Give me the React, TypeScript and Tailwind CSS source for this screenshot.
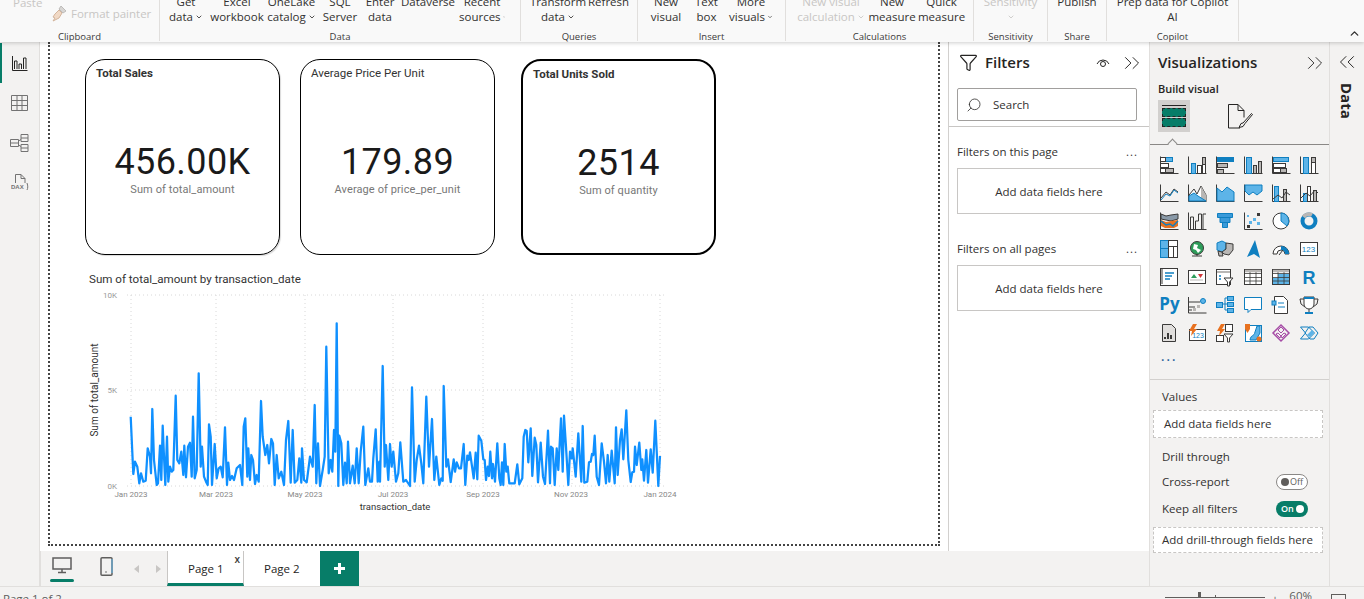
import { ChevronDown, ChevronUp, ChevronsLeft, ChevronsRight, Funnel, Search } from 'lucide-react';
import type { ReactNode } from 'react';

const DARK = '#3b3a39';
const BLUE = '#5db4e8';
const DEEP = '#0f7fc0';
const GREY = '#b9b7b5';
const ORANGE = '#e8711f';

// traced from the chart, in 3x pixels
const LINE_LEFT = [
  [152, 440], [160, 612], [165, 575], [172, 590], [178, 640], [183, 610], [190, 635], [197, 632], [203, 535], [210, 560], [213, 610], [217, 417], [222, 570], [230, 645], [234, 640], [240, 527], [244, 630], [248, 467], [252, 560], [256, 645], [261, 500], [265, 635], [270, 590], [275, 605], [280, 600], [287, 377], [292, 570], [298, 580], [304, 545], [310, 615], [313, 527], [318, 622], [324, 530], [330, 518], [335, 620], [339, 440], [344, 625], [350, 600], [356, 310], [362, 590], [366, 530], [372, 620], [378, 635], [383, 645], [387, 463], [392, 500], [396, 645], [404, 522], [410, 625], [416, 595], [422, 590], [428, 622], [435, 472], [441, 645], [445, 578], [450, 630], [456, 618], [462, 630], [470, 595], [480, 585], [487, 645], [491, 470], [496, 445], [502, 620], [505, 535], [510, 630], [514, 555], [519, 570], [525, 642], [530, 615], [536, 635], [543, 393], [548, 500], [556, 555], [562, 525], [567, 580], [574, 507], [579, 520], [584, 645], [590, 555], [596, 625], [604, 605], [612, 645], [618, 510], [625, 453], [632, 638], [638, 480], [644, 638], [652, 630], [658, 565], [664, 638], [666, 535], [672, 630], [680, 637], [690, 560], [698, 590], [704, 405], [709, 640], [714, 520], [720, 648], [728, 600], [734, 560], [739, 230], [746, 610], [752, 570], [757, 605], [762, 480], [766, 545], [770, 160], [775, 648], [778, 497], [784, 520], [790, 645], [795, 578], [800, 640], [804, 515], [810, 640], [818, 587], [824, 640], [830, 535], [836, 640], [842, 545], [850, 470], [856, 645], [865, 595], [870, 635], [876, 635], [880, 565], [887, 478], [893, 635], [898, 575],
];
const LINE_RIGHT = [
  [0, 635], [8, 288], [14, 590], [18, 525], [25, 630], [30, 522], [35, 590], [40, 545], [48, 635], [55, 610], [61, 517], [70, 635], [78, 630], [90, 648], [96, 352], [104, 635], [110, 570], [117, 527], [124, 580], [130, 640], [139, 380], [147, 590], [156, 447], [163, 630], [169, 560], [178, 645], [184, 625], [188, 632], [191, 348], [199, 590], [204, 568], [212, 636], [221, 568], [225, 605], [230, 577], [237, 595], [243, 595], [251, 522], [256, 645], [262, 557], [266, 570], [270, 547], [277, 595], [281, 625], [287, 548], [292, 628], [296, 497], [304, 512], [310, 568], [314, 570], [318, 630], [323, 590], [327, 618], [331, 545], [336, 625], [339, 582], [345, 635], [352, 520], [358, 625], [362, 645], [366, 577], [370, 645], [374, 522], [379, 605], [383, 590], [388, 640], [404, 640], [412, 583], [418, 643], [427, 625], [431, 500], [436, 480], [440, 483], [445, 577], [452, 475], [457, 618], [464, 503], [469, 525], [474, 637], [482, 518], [489, 620], [495, 642], [504, 482], [510, 640], [513, 530], [518, 535], [524, 645], [530, 535], [535, 600], [543, 445], [548, 605], [552, 437], [558, 530], [565, 645], [570, 545], [575, 565], [578, 535], [587, 620], [595, 490], [604, 635], [608, 468], [613, 638], [622, 635], [627, 577], [632, 575], [636, 552], [640, 555], [644, 497], [650, 620], [657, 645], [665, 520], [672, 575], [678, 640], [683, 555], [688, 635], [695, 542], [704, 640], [708, 472], [713, 615], [720, 510], [725, 478], [730, 568], [739, 421], [745, 570], [752, 636], [757, 607], [762, 605], [765, 530], [770, 585], [778, 518], [784, 600], [787, 568], [792, 632], [799, 540], [804, 638], [812, 538], [818, 608], [826, 452], [835, 648], [840, 558],
];

const linePoints = [...LINE_LEFT, ...LINE_RIGHT.map(([x, y]) => [x + 900, y])]
  .map(([x, y]) => `${(x / 3).toFixed(1)},${(y / 3).toFixed(1)}`)
  .join(' ');

const Axis = () => <path d="M.5 .5v17h18" fill="none" stroke={DARK} />;

function Box(props: { x: number; y: number; w: number; h: number; fill?: string; stroke?: string }) {
  return (
    <rect
      x={props.x + 0.5}
      y={props.y + 0.5}
      width={props.w}
      height={props.h}
      fill={props.fill ?? '#fff'}
      stroke={props.stroke ?? DARK}
    />
  );
}

// the visual picker, row by row
const VISUAL_ICONS: ReactNode[] = [
  <><Axis /><Box x={5} y={1} w={7} h={4} fill={BLUE} stroke={DEEP} /><Box x={0} y={1} w={5} h={4} /><Box x={0} y={7} w={8} h={4} /><Box x={0} y={12} w={5} h={4} /><Box x={5} y={12} w={8} h={4} fill={GREY} /></>,
  <><Axis /><Box x={3} y={7} w={4} h={10} fill={BLUE} stroke={DEEP} /><Box x={9} y={9} w={4} h={8} /><Box x={14} y={1} w={3} h={7} fill={GREY} /><Box x={14} y={8} w={3} h={9} /></>,
  <><Axis /><Box x={1} y={1} w={16} h={4} fill={DEEP} stroke={DEEP} /><Box x={1} y={7} w={10} h={4} fill={GREY} /><Box x={1} y={13} w={6} h={4} fill={GREY} /></>,
  <><Axis /><Box x={2} y={1} w={5} h={16} fill={BLUE} stroke={DEEP} /><Box x={9} y={9} w={3} h={8} fill={GREY} /><Box x={14} y={5} w={3} h={12} fill={GREY} /></>,
  <><Axis /><Box x={1} y={1} w={15} h={4} fill={BLUE} stroke={DEEP} /><Box x={1} y={7} w={12} h={4} /><Box x={1} y={12} w={7} h={4} /><Box x={8} y={12} w={6} h={4} fill={GREY} /></>,
  <><Axis /><Box x={3} y={1} w={5} h={16} fill={BLUE} stroke={DEEP} /><Box x={11} y={1} w={4} h={5} fill={GREY} /><Box x={11} y={6} w={4} h={11} /></>,

  <><Axis /><path d="M1 14l5-6 4 3 4-6 4 3" fill="none" stroke={DARK} /><path d="M1 16l5-6 4 2 4-6 4 3" fill="none" stroke={DEEP} /></>,
  <><Axis /><path d="M1 17V11l5-6 3 5 4-8 5 9v6z" fill="#fff" stroke={DARK} /><path d="M13 2l5 9v6h-5z" fill={GREY} /><path d="M1 17v-5l5-3 4 3 8 5z" fill={BLUE} stroke={DEEP} /></>,
  <><Axis /><path d="M1 4l5 4 5-5 7 5v9H1z" fill={BLUE} stroke={DEEP} /></>,
  <><Axis /><path d="M1 1h17v6l-5 4-4-3-4 3-4-4z" fill={BLUE} stroke={DEEP} /></>,
  <><Axis /><Box x={2} y={2} w={4} h={15} fill={BLUE} stroke={DEEP} /><Box x={11} y={5} w={3} h={12} fill={GREY} /><path d="M1 15l5-4 4 3 4-6 4 3" fill="none" stroke={DARK} /></>,
  <><Axis /><Box x={3} y={9} w={4} h={8} fill={BLUE} stroke={DEEP} /><Box x={7} y={2} w={3} h={15} /><Box x={13} y={6} w={3} h={11} fill={GREY} /><path d="M1 14l5-5 4 3 5-6 3 3" fill="none" stroke={DARK} /></>,

  <><Axis /><path d="M1 2l5 2 5-1 7-1v5l-7 2-5-1-5-1z" fill="#8a9aa8" stroke={DARK} /><path d="M1 8l5 2 5-1 7-1v6l-4 2H5l-4-2z" fill={ORANGE} /><path d="M1 9l5 4 4-1 3 2 5-5" fill="none" stroke={DEEP} strokeWidth="1.500" /></>,
  <><Axis /><path d="M2.500 17V5h3v12M7.500 17V9h3V2h3v15M15 17V2h3" fill="none" stroke={DARK} /></>,
  <path d="M1.500 1.500h15v4h-15zM4 5.500h10v5H4zM6.500 10.500h5v5h-5z" fill="#3a9ad9" stroke={DEEP} />,
  <><Axis /><rect x="13" y="1" width="3" height="3" fill={DARK} /><rect x="9" y="6" width="3" height="3" fill={BLUE} /><rect x="5" y="9" width="3" height="3" fill={BLUE} /><rect x="13" y="10" width="3" height="3" fill={BLUE} /><rect x="3" y="13" width="3" height="3" fill={DARK} /><rect x="3" y="3" width="2" height="2" fill={BLUE} /></>,
  <><circle cx="9" cy="9" r="8" fill="#fff" stroke={DARK} /><path d="M9 9V1a8 8 0 0 1 6 13z" fill={BLUE} stroke={DEEP} /></>,
  <><circle cx="9" cy="9" r="6.500" fill="none" stroke={DEEP} strokeWidth="4" /><path d="M3.500 5A6.500 6.500 0 0 1 12 3" fill="none" stroke={GREY} strokeWidth="4" /></>,

  <><Box x={0} y={0} w={8} h={8} fill={BLUE} stroke={DEEP} /><Box x={0} y={8} w={8} h={9} fill={BLUE} stroke={DEEP} /><Box x={8} y={0} w={9} h={6} /><Box x={8} y={6} w={5} h={11} /><Box x={13} y={6} w={4} h={11} /></>,
  <><circle cx="9" cy="8" r="6.500" fill="#2d9d5a" stroke={DARK} /><path d="M6 4l4 1-1 3 4 2-3 3-2-3-3-1z" fill="#fff" /><path d="M4 16h10M9 14v2" stroke={DARK} fill="none" /></>,
  <><path d="M1 3l5-2 4 2v6l-4 3-5-2z" fill={BLUE} stroke={DEEP} /><path d="M10 3l7 1v6l-4 5-5-1-2-2 4-3z" fill={GREY} stroke={DARK} /><path d="M2 11l4 1 1 4H3z" fill={GREY} stroke={DARK} /></>,
  <path d="M11 0l5 18-6-4-7 3z" fill={DEEP} />,
  <><path d="M1 14a8 8 0 0 1 16 0h-4a4 4 0 0 0-8 0z" fill="#fff" stroke={DARK} /><path d="M9 6a8 8 0 0 1 8 8h-4a4 4 0 0 0-4-4z" fill={DEEP} /><path d="M7 15l4-5" stroke={DARK} /></>,
  <><Box x={0} y={2} w={17} h={13} fill="#fff" /><text x="8.500" y="12" textAnchor="middle" fontSize="8" fill={DEEP} fontFamily="'Liberation Sans', sans-serif">123</text></>,

  <><Box x={0} y={0} w={17} h={17} /><path d="M2 1v15" stroke={DARK} /><path d="M5 5h9M5 8h7M5 11h5" stroke={DEEP} strokeWidth="1.500" /></>,
  <><Box x={0} y={2} w={17} h={13} /><path d="M3 10l3-4 3 4z" fill="#2d9d5a" /><path d="M10 6h5l-2.500 4z" fill="#d13438" /><path d="M2 12h13" stroke={GREY} /></>,
  <><Box x={0} y={1} w={14} h={15} /><path d="M1 4h13" stroke={GREY} strokeWidth="2" /><path d="M8 10h9l-3.500 4v4h-2v-4z" fill="#fff" stroke={DARK} /><path d="M3 8h2M3 11h2" stroke={DEEP} strokeWidth="1.500" /></>,
  <><Box x={0} y={1} w={17} h={15} /><path d="M.5 5.500h17M.5 9.500h17M.5 13h17M6 1v15M12 1v15" stroke={DARK} fill="none" strokeWidth=".8" /><path d="M1 3h16" stroke={GREY} strokeWidth="2.500" /></>,
  <><Box x={0} y={1} w={17} h={15} /><rect x="6" y="6" width="11" height="10" fill={BLUE} /><rect x="1" y="10" width="5" height="6" fill={BLUE} /><path d="M.5 5.500h17M.5 9.500h17M.5 13h17M6 1v15M12 1v15" stroke={DARK} fill="none" strokeWidth=".8" /><path d="M1 3h16" stroke={GREY} strokeWidth="2.500" /></>,
  <text x="9" y="16" textAnchor="middle" fontSize="18" fontWeight="700" fill={DEEP} fontFamily="'Liberation Sans', sans-serif">R</text>,

  <text x="9.500" y="14" textAnchor="middle" fontSize="17" fontWeight="700" fill={DEEP} fontFamily="'Open Sans', sans-serif">Py</text>,
  <><path d="M.5 1v16h18M1 6h11M1 11h6M1 14h3" fill="none" stroke={DARK} /><circle cx="15" cy="5" r="2.500" fill={BLUE} stroke={DEEP} /><rect x="9" y="9" width="3" height="3" fill={GREY} /><rect x="5" y="12" width="3" height="3" fill={GREY} /></>,
  <><Box x={0} y={6} w={6} h={5} fill={BLUE} stroke={DEEP} /><Box x={11} y={0} w={6} h={4} fill={BLUE} stroke={DEEP} /><Box x={11} y={6} w={6} h={4} fill={BLUE} stroke={DEEP} /><Box x={11} y={12} w={6} h={4} fill={BLUE} stroke={DEEP} /><path d="M6 8h3M9 2v12M9 2h2M9 8h2M9 14h2" fill="none" stroke={DEEP} /></>,
  <path d="M.5 1.500h17v12H7l-3 3v-3H.500z" fill="#fff" stroke={DEEP} />,
  <><path d="M2.500 .5h9l4 4v13h-13z" fill="#fff" stroke={DARK} /><rect x="0" y="5" width="4" height="4" fill={BLUE} stroke={DEEP} /><path d="M6 7h6M6 11h7" stroke={DEEP} /></>,
  <><path d="M4 1h10v7a5 5 0 0 1-10 0z" fill="#fff" stroke={DARK} /><path d="M4 3H0l1 5 4 3M14 3h4l-1 5-4 3M9 13v3M5 17h8" fill="none" stroke={DARK} /><path d="M4 1h10v2H4zM5 16h8v2H5z" fill={DEEP} /></>,

  <><path d="M2.500 .5h9l4 4v13h-13z" fill="#e1dfdd" stroke={DARK} /><path d="M5 15v-2M8 15V9M11 15v-4" stroke={DARK} strokeWidth="2" /></>,
  <><Box x={1} y={5} w={16} h={11} /><text x="10" y="14" textAnchor="middle" fontSize="7" fill={DEEP} fontFamily="'Liberation Sans', sans-serif">123</text><path d="M5 0h4L6 5h3l-6 7 1-5H1z" fill={ORANGE} /></>,
  <><Box x={9} y={0} w={7} h={7} /><Box x={0} y={11} w={7} h={6} /><path d="M8 10h9l-3.500 4v4h-2v-4z" fill="#fff" stroke={DARK} /><path d="M5 0h4L6 5h3l-6 7 1-5H1z" fill={ORANGE} /></>,
  <><Box x={1} y={1} w={16} h={16} stroke={DEEP} /><path d="M6 16c1-6 4-3 5-8l2-6h3v7l-4 7z" fill={BLUE} stroke={DEEP} /><path d="M1 0h5v5L3.500 9 1 5z" fill={ORANGE} /><circle cx="15" cy="15" r="2.500" fill={ORANGE} /></>,
  <><path d="M9 1l8 8-8 8-8-8z" fill="none" stroke="#a64ca6" strokeWidth="1.500" /><path d="M9 3l3 3-3 3-3-3zM6 9l3 3-1 2-4-4zM12 9l2 1-4 4-1-2z" fill="none" stroke="#a64ca6" /></>,
  <><path d="M.5 3h8l6 6-6 6h-8l5-6z" fill="none" stroke={DEEP} /><path d="M5 9l4-6h4l5 6-4 6h-4z" fill="none" stroke={DEEP} /><path d="M7 11l5-5 2 3-4 4z" fill={BLUE} /></>,
];

function RibbonItem(props: { width: string; top?: string; bottom: string; menu?: boolean; muted?: boolean }) {
  return (
    <div className={`${props.width} shrink-0 text-center text-[11.5px] leading-[15px] whitespace-nowrap ${props.muted ? 'text-[#c8c6c4]' : 'text-[#323130]'}`}>
      <div className="h-[15px]">{props.top}</div>
      <div className="flex h-[15px] items-center justify-center gap-[2px]">
        {props.bottom}
        {props.menu && <ChevronDown size={8} strokeWidth={2.5} />}
      </div>
    </div>
  );
}

function RibbonGroup(props: { width: string; label: string; className?: string; children: ReactNode }) {
  return (
    <div className={`${props.width} shrink-0 h-[41px] flex flex-col border-r border-[#e1dfdd]`}>
      <div className={`h-[24px] shrink-0 overflow-hidden flex items-end ${props.className ?? ''}`}>{props.children}</div>
      <div className="mt-[6px] shrink-0 text-center text-[9.5px] leading-[14px] text-[#3b3a39]">{props.label}</div>
    </div>
  );
}

function Ribbon() {
  return (
    <header className="relative z-10 h-[42px] shrink-0 flex bg-[#f9f9f9] shadow-[0_1px_4px_rgba(0,0,0,0.2)] overflow-hidden">
      <div className="w-[160px] shrink-0 h-[41px] flex flex-col border-r border-[#e1dfdd]">
        <div className="h-[24px] shrink-0 relative overflow-hidden">
          <div className="absolute left-[13px] top-[-6px] text-[11.5px] text-[#c8c6c4]">Paste</div>
          <div className="absolute left-[51px] top-[5px] flex items-center gap-[3px] text-[11.5px] leading-[17px] text-[#c8c6c4] whitespace-nowrap">
            <svg width="17" height="17" viewBox="0 0 17 17">
              <path d="M10 1l5 5-3 2-4-4z" fill="#d8d6d4" stroke="#bdbbb9" />
              <path d="M8 5l3 3-3 5-6 3 2-3-2-1 2-3z" fill="#f1d9c5" stroke="#d3b49c" />
            </svg>
            Format painter
          </div>
        </div>
        <div className="mt-[6px] shrink-0 text-center text-[9.5px] leading-[14px] text-[#3b3a39]">Clipboard</div>
      </div>
      <RibbonGroup width="w-[361px]" label="Data" className="pl-[4px]">
        <RibbonItem width="w-[44px]" top="Get" bottom="data" menu />
        <RibbonItem width="w-[58px]" top="Excel" bottom="workbook" />
        <RibbonItem width="w-[51px]" top="OneLake" bottom="catalog" menu />
        <RibbonItem width="w-[46px]" top="SQL" bottom="Server" />
        <RibbonItem width="w-[34px]" top="Enter" bottom="data" />
        <RibbonItem width="w-[62px]" top="Dataverse" bottom="" />
        <RibbonItem width="w-[46px]" top="Recent" bottom="sources" menu />
      </RibbonGroup>
      <RibbonGroup width="w-[117px]" label="Queries" className="pl-[7px]">
        <RibbonItem width="w-[60px]" top="Transform" bottom="data" menu />
        <RibbonItem width="w-[41px]" top="Refresh" bottom="" />
      </RibbonGroup>
      <RibbonGroup width="w-[148px]" label="Insert" className="pl-[10px]">
        <RibbonItem width="w-[36px]" top="New" bottom="visual" />
        <RibbonItem width="w-[45px]" top="Text" bottom="box" />
        <RibbonItem width="w-[44px]" top="More" bottom="visuals" menu />
      </RibbonGroup>
      <RibbonGroup width="w-[188px]" label="Calculations" className="pl-[10px]">
        <RibbonItem width="w-[70px]" top="New visual" bottom="calculation" menu muted />
        <RibbonItem width="w-[52px]" top="New" bottom="measure" />
        <RibbonItem width="w-[47px]" top="Quick" bottom="measure" />
      </RibbonGroup>
      <RibbonGroup width="w-[74px]" label="Sensitivity">
        <div className="w-full text-center text-[11.5px] leading-[15px] text-[#c8c6c4]">
          <div>Sensitivity</div>
          <div className="flex h-[15px] items-center justify-center"><ChevronDown size={8} strokeWidth={2.5} /></div>
        </div>
      </RibbonGroup>
      <RibbonGroup width="w-[59px]" label="Share">
        <RibbonItem width="w-full" top="Publish" bottom="" />
      </RibbonGroup>
      <RibbonGroup width="w-[132px]" label="Copilot">
        <RibbonItem width="w-full" top="Prep data for Copilot" bottom="AI" />
      </RibbonGroup>
      <ChevronUp size={13} strokeWidth={2.5} className="absolute right-[3px] top-[27px] text-[#323130]" />
    </header>
  );
}

function LeftRail() {
  return (
    <nav className="w-[40px] shrink-0 flex flex-col pt-px bg-[#f3f2f1] border-r border-[#e1dfdd]">
      <div className="h-[40px] flex items-center justify-center border-l-[2px] border-[#077d68] pr-[2px]">
        <svg width="16" height="16" viewBox="0 0 16 16" fill="none" stroke="#252423">
          <path d="M.5 1v14.500h15M2.500 14V6h2.500v8M7 14V9h2.500v5M11.500 14V3H14v11" />
        </svg>
      </div>
      <div className="h-[40px] flex items-center justify-center">
        <svg width="17" height="16" viewBox="0 0 17 16" fill="none" stroke="#737373">
          <path d="M.5 .5h16v15H.500zM.5 5.500h16M.5 10.500h16M6 .5v15M11 .5v15" />
        </svg>
      </div>
      <div className="h-[40px] flex items-center justify-center">
        <svg width="19" height="18" viewBox="0 0 19 18" fill="none" stroke="#737373">
          <path d="M.5 5.500h8v7h-8zM.5 9h8M11 .5h7v7h-7zM11 4h7M11 10.500h7v7h-7zM11 14h7M8.500 7L11 5.500M8.500 11l2.500 1.500" />
        </svg>
      </div>
      <div className="h-[40px] flex items-center justify-center">
        <svg width="18" height="18" viewBox="0 0 18 18" fill="none" stroke="#737373">
          <path d="M4.500 9V.5H10l4 4V9M10 .5v4h4M16 9c1 3 1 5 0 7" />
          <text x="0" y="15" fontSize="6" fontWeight="700" fill="#737373" stroke="none" fontFamily="'Liberation Sans', sans-serif">DAX</text>
        </svg>
      </div>
    </nav>
  );
}

function MetricCard(props: { title: string; value: string; caption: string; className: string; bold?: boolean }) {
  return (
    <div className={`w-[195px] h-[196px] shrink-0 flex flex-col items-stretch rounded-[20px] border-black ${props.className} font-['Roboto',sans-serif]`}>
      <div className={`pl-[10px] pt-[6px] text-[11.5px] leading-[14px] text-[#333] ${props.bold ? 'font-bold' : ''}`}>{props.title}</div>
      <div className="mt-[62px] text-center text-[36px] leading-[40px] tracking-[0.4px] text-[#1a1a1a]">{props.value}</div>
      <div className="text-center text-[11px] leading-[16px] tracking-[0.1px] text-[#777]">{props.caption}</div>
    </div>
  );
}

function SalesChart() {
  const gridX = [51, 136, 225, 313, 403, 492, 580];
  const gridY = [25, 120, 216];
  const labels = [
    { x: 51, text: 'Jan 2023' },
    { x: 136, text: 'Mar 2023' },
    { x: 225, text: 'May 2023' },
    { x: 313, text: 'Jul 2023' },
    { x: 403, text: 'Sep 2023' },
    { x: 491, text: 'Nov 2023' },
    { x: 580, text: 'Jan 2024' },
  ];
  return (
    <svg width="600" height="250" viewBox="0 0 600 250" className="block font-['Roboto',sans-serif]">
      <text x="9" y="13" fontSize="11.600" fill="#333">Sum of total_amount by transaction_date</text>
      {gridY.map((y) => (
        <line key={y} x1="47" x2="586" y1={y} y2={y} stroke="#d8d8d8" strokeDasharray="1 3" />
      ))}
      {gridX.map((x) => (
        <line key={x} x1={x} x2={x} y1="25" y2="216" stroke="#d8d8d8" strokeDasharray="1 3" />
      ))}
      <text x="37" y="28" fontSize="8" fill="#999" textAnchor="end">10K</text>
      <text x="37" y="123" fontSize="8" fill="#999" textAnchor="end">5K</text>
      <text x="37" y="219" fontSize="8" fill="#999" textAnchor="end">0K</text>
      {labels.map((label) => (
        <text key={label.text} x={label.x} y="227" fontSize="8" fill="#888" textAnchor="middle">{label.text}</text>
      ))}
      <text transform="translate(18 120) rotate(-90)" fontSize="10" fill="#333" textAnchor="middle">Sum of total_amount</text>
      <text x="315" y="240" fontSize="9.500" fill="#333" textAnchor="middle">transaction_date</text>
      <polyline points={linePoints} fill="none" stroke="#0f90ff" strokeWidth="2.250" strokeLinejoin="round" />
    </svg>
  );
}

function Canvas() {
  return (
    <main className="w-[908px] shrink-0 bg-white px-[8px] pb-[5px] flex flex-col">
      <div className="flex-1 border-x-2 border-b-2 border-dotted border-[#444] pt-[17px]">
        <div className="flex pl-[35px]">
          <MetricCard title="Total Sales" value="456.00K" caption="Sum of total_amount" className="border shadow-[1px_1px_1px_rgba(0,0,0,0.15)]" bold />
          <div className="w-[20px] shrink-0" />
          <MetricCard title="Average Price Per Unit" value="179.89" caption="Average of price_per_unit" className="border-[1.5px]" />
          <div className="w-[26px] shrink-0" />
          <MetricCard title="Total Units Sold" value="2514" caption="Sum of quantity" className="border-2" bold />
        </div>
        <div className="pl-[30px] mt-[15px]">
          <SalesChart />
        </div>
      </div>
    </main>
  );
}

function FilterDrop(props: { title: string }) {
  return (
    <div>
      <div className="flex h-[20px] items-center justify-between pl-[8px] pr-[11px] pb-px text-[11.5px] text-[#323130]">
        <span>{props.title}</span>
        <span className="tracking-[1px] text-[#3b3a39]">...</span>
      </div>
      <div className="mx-[8px] mt-[6px] flex h-[46px] w-[184px] items-center justify-center border border-[#c8c6c4] bg-white pt-px text-[11.5px] text-[#323130]">
        Add data fields here
      </div>
    </div>
  );
}

function FiltersPane() {
  return (
    <aside className="w-[201px] shrink-0 bg-white border-l border-[#d2d0ce] flex flex-col">
      <div className="flex h-[40px] items-center pl-[10px] pr-[4px] pt-px text-[#252423]">
        <Funnel size={19} strokeWidth={1.5} />
        <span className="ml-[7px] text-[15px] font-semibold">Filters</span>
        <svg width="14" height="12" viewBox="0 0 14 12" fill="none" stroke="#252423" className="ml-auto mr-[9px]">
          <path d="M1 7a6.500 6.500 0 0 1 12 0" />
          <circle cx="7" cy="7" r="2.500" />
        </svg>
        <ChevronsRight size={26} strokeWidth={0.9} />
      </div>
      <div className="mx-[8px] mt-[6px] flex h-[33px] w-[180px] items-center gap-[11px] border border-[#a19f9d] rounded-[2px] pl-[8px] pt-px text-[11.5px] text-[#323130]">
        <Search size={16} strokeWidth={1.25} className="-scale-x-100" />
        Search
      </div>
      <div className="mt-[5px] border-b border-[#c8c6c4]" />
      <div className="mt-[15px]">
        <FilterDrop title="Filters on this page" />
      </div>
      <div className="mt-[25px]">
        <FilterDrop title="Filters on all pages" />
      </div>
    </aside>
  );
}

function PageTabs() {
  return (
    <div className="h-[35px] shrink-0 flex bg-[#f3f2f1] border-l border-[#e1dfdd]">
      <div className="w-[126px] shrink-0 flex items-start">
        <div className="ml-[9px] w-[24px] flex flex-col items-center pt-[6px]">
          <svg width="20" height="17" viewBox="0 0 20 17" fill="none" stroke="#5f5e5d" strokeWidth="1.500">
            <path d="M1 1h18v11H1zM10 12v3M6 15.500h8" />
          </svg>
          <div className="mt-[5px] h-[3px] w-[24px] rounded-full bg-[#077d68]" />
        </div>
        <svg width="13" height="19" viewBox="0 0 13 19" fill="none" className="ml-[26px] mt-[6px]">
          <rect x="1" y=".75" width="11" height="17.500" rx="1" stroke="#5f5e5d" strokeWidth="1.500" />
          <path d="M12 2v14" stroke="#5db4e8" />
          <circle cx="6" cy="15" r=".8" fill="#5f5e5d" />
        </svg>
        <div className="ml-[21px] mt-[14px] h-0 w-0 border-y-[4px] border-r-[5px] border-y-transparent border-r-[#c8c6c4]" />
        <div className="ml-[17px] mt-[14px] h-0 w-0 border-y-[4px] border-l-[5px] border-y-transparent border-l-[#c8c6c4]" />
      </div>
      <div className="relative w-[77px] shrink-0 flex items-center bg-white border-x border-[#c8c6c4] border-b-[3px] border-b-[#077d68] pl-[20px] pt-[3px] text-[11.5px] text-[#252423]">
        Page 1
        <span className="absolute right-[3px] top-[2px] text-[10px] leading-[12px] font-semibold text-[#3b3a39]">x</span>
      </div>
      <div className="w-[76px] shrink-0 flex items-center bg-white pl-[20px] text-[11.5px] text-[#252423]">Page 2</div>
      <div className="w-[39px] shrink-0 flex items-center justify-center bg-[#077d68]">
        <svg width="11" height="11" viewBox="0 0 11 11" fill="#fff">
          <path d="M4 0h3v4h4v3H7v4H4V7H0V4h4z" />
        </svg>
      </div>
    </div>
  );
}

function Toggle(props: { on?: boolean }) {
  if (props.on) {
    return (
      <div className="flex h-[16px] w-[32px] items-center justify-between rounded-full bg-[#077d68] pl-[5px] pr-[4px] text-[9px] font-semibold text-white">
        On
        <span className="h-[8px] w-[8px] rounded-full bg-white" />
      </div>
    );
  }
  return (
    <div className="flex h-[16px] w-[32px] items-center gap-[1px] rounded-full border border-[#8a8886] bg-white pl-[4px] text-[9px] text-[#605e5c]">
      <span className="h-[8px] w-[8px] rounded-full bg-[#605e5c]" />
      Off
    </div>
  );
}

function VisualizationsPane() {
  return (
    <aside className="w-[181px] shrink-0 bg-[#f3f2f1] border-l border-r border-[#e1dfdd] flex flex-col text-[#323130]">
      <div className="flex h-[39px] items-center justify-between pl-[8px] pr-px pt-[2px]">
        <span className="text-[15px] font-semibold text-[#252423]">Visualizations</span>
        <ChevronsRight size={26} strokeWidth={0.9} />
      </div>
      <div className="pl-[8px] text-[11px] leading-[16px] font-semibold text-[#252423]">Build visual</div>
      <div className="mt-[3px] flex items-center pl-[8px]">
        <div className="flex h-[32px] w-[32px] flex-col justify-center gap-[1px] bg-[#d2d0ce] px-[4px]">
          <div className="h-px bg-[#252423] mb-[1px]" />
          <div className="h-[9px] border border-dashed border-[#252423] bg-[#077d68]" />
          <div className="h-[9px] border border-dashed border-[#252423] bg-[#077d68]" />
        </div>
        <svg width="26" height="27" viewBox="0 0 26 27" fill="none" stroke="#252423" className="ml-[37px]">
          <path d="M13 25H1.500V1.500H11l6 6v7M11 1.500v6h6" />
          <path d="M24.500 10.500L16 20l-2 .5-2 4 4-1 2-3 7.500-9z" />
        </svg>
      </div>
      <div className="relative mt-[12px] border-b border-[#8a8886]">
        <div className="absolute left-[19px] top-[-4px] h-[7px] w-[7px] rotate-45 border-l border-t border-[#8a8886] bg-[#f3f2f1]" />
      </div>
      <div className="mt-[6px] grid grid-cols-[repeat(6,28px)] auto-rows-[28px] pl-[5px]">
        {VISUAL_ICONS.map((icon, i) => (
          <div key={i} className="flex items-center justify-center">
            <svg width="19" height="18" viewBox="0 0 19 18" className="overflow-visible">{icon}</svg>
          </div>
        ))}
        <div className="flex items-center justify-center pb-[12px] text-[15px] leading-[10px] tracking-[1.5px] text-[#1f5c99]">...</div>
      </div>
      <div className="mt-[4px] border-b border-[#d2d0ce]" />
      <div className="mt-[9px] pl-[12px] text-[11.5px] leading-[16px]">Values</div>
      <div className="mx-[3px] mt-[5px] flex h-[28px] w-[170px] items-center border border-dashed border-[#c8c6c4] bg-white pl-[10px] text-[11.5px]">
        Add data fields here
      </div>
      <div className="mt-[11px] pl-[12px] text-[11.5px] leading-[16px] font-medium">Drill through</div>
      <div className="mt-[9px] flex h-[16px] items-center justify-between pl-[12px] pr-[21px] text-[11.5px]">
        Cross-report
        <Toggle />
      </div>
      <div className="mt-[11px] flex h-[16px] items-center justify-between pl-[12px] pr-[21px] text-[11.5px]">
        Keep all filters
        <Toggle on />
      </div>
      <div className="mx-[3px] mt-[10px] flex h-[26px] w-[170px] items-center border border-dashed border-[#c8c6c4] bg-white pl-[8px] text-[11.5px] whitespace-nowrap">
        Add drill-through fields here
      </div>
    </aside>
  );
}

function DataRail() {
  return (
    <aside className="flex-1 bg-[#f3f2f1] flex flex-col items-center pt-[7px] text-[#252423]">
      <ChevronsLeft size={26} strokeWidth={0.9} />
      <div className="mt-[8px] text-[15px] leading-[16px] font-bold [writing-mode:vertical-rl]">Data</div>
    </aside>
  );
}

function StatusBar() {
  return (
    <footer className="h-[13px] shrink-0 flex items-start overflow-hidden bg-[#f3f2f1] border-t border-[#e1dfdd] pl-[3px] pt-[4px] text-[11.5px] leading-[16px] text-[#605e5c]">
      <span>Page 1 of 2</span>
      <div className="ml-auto flex items-start">
        <span className="text-[#605e5c]">-</span>
        <div className="relative ml-[3px] mt-[6px] h-px w-[100px] bg-[#605e5c]">
          <div className="absolute left-[33px] top-[-5px] h-[6px] w-[3px] bg-[#605e5c]" />
          <div className="absolute left-[50px] top-[-2px] h-[3px] w-px bg-[#605e5c]" />
        </div>
        <span className="ml-[7px]">+</span>
        <span className="ml-[11px] mt-[-3px]">60%</span>
        <div className="ml-[19px] mt-[3px] h-[14px] w-[15px] border border-[#605e5c]" />
        <div className="w-[18px]" />
      </div>
    </footer>
  );
}

export default function App() {
  return (
    <div className="h-[599px] w-[1364px] flex flex-col overflow-hidden bg-[#f3f2f1] font-['Open_Sans',sans-serif]">
      <Ribbon />
      <div className="flex-1 min-h-0 flex">
        <LeftRail />
        <div className="w-[1109px] shrink-0 flex flex-col">
          <div className="flex-1 min-h-0 flex">
            <Canvas />
            <FiltersPane />
          </div>
          <PageTabs />
        </div>
        <VisualizationsPane />
        <DataRail />
      </div>
      <StatusBar />
    </div>
  );
}
